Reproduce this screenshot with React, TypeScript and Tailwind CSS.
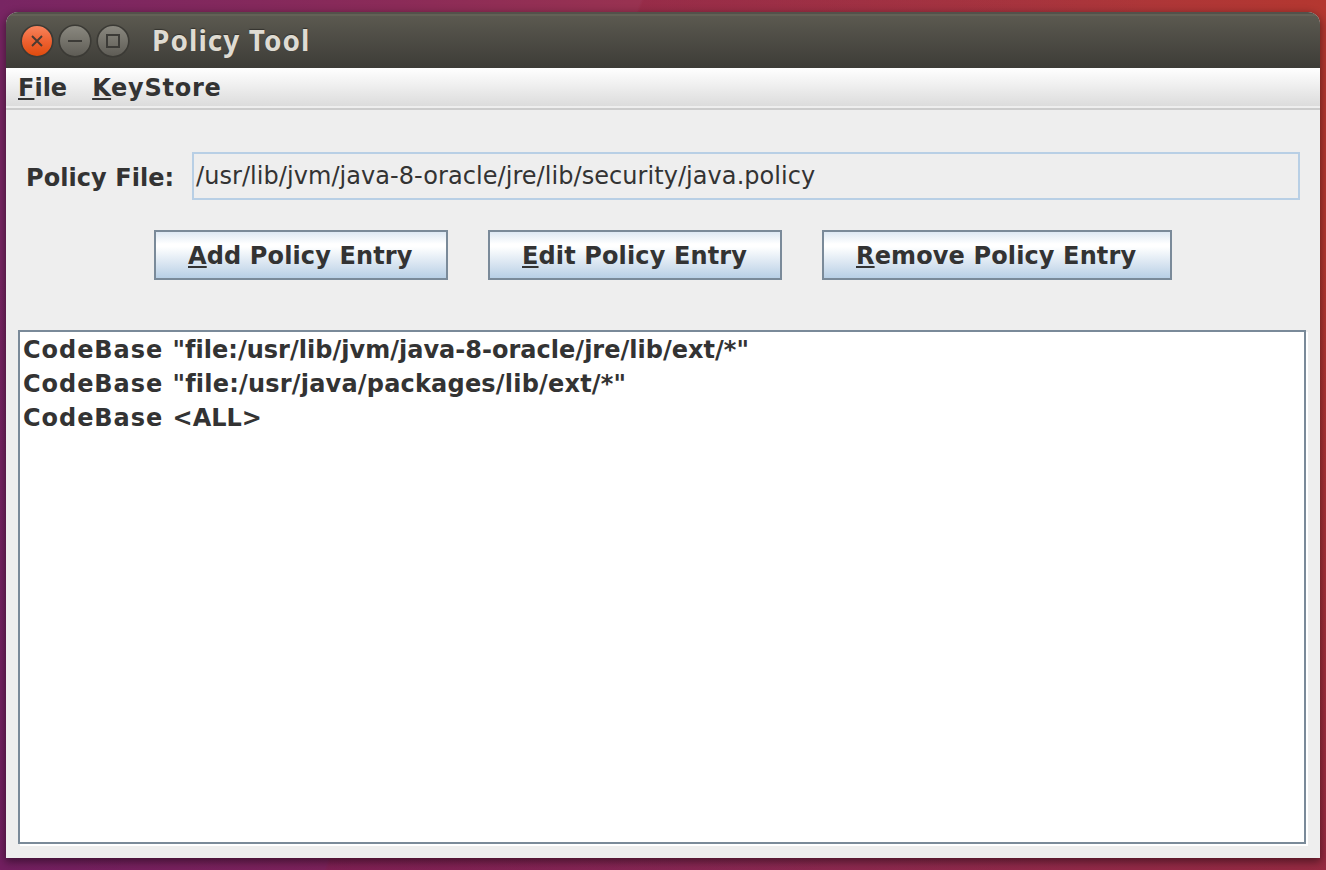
import React from "react";

function Mnemonic({ text }: { text: string }) {
  return (
    <span className="whitespace-pre">
      <span className="underline decoration-[#333333] decoration-2 underline-offset-2 [text-decoration-skip-ink:none]">
        {text[0]}
      </span>
      {text.slice(1)}
    </span>
  );
}

function WindowButton({ kind }: { kind: "close" | "minimize" | "maximize" }) {
  const close = kind === "close";
  return (
    <svg width="34" height="34" viewBox="0 0 34 34" fill="none">
      <defs>
        <linearGradient id={`face-${kind}`} x1="0" y1="0" x2="0" y2="1">
          <stop offset="0" stopColor={close ? "#f9865f" : "#8b8980"} />
          <stop offset="0.5" stopColor={close ? "#ee6232" : "#75736b"} />
          <stop offset="1" stopColor={close ? "#df4a0b" : "#5d5b54"} />
        </linearGradient>
      </defs>
      <circle cx="17" cy="17" r="15.8" fill={`url(#face-${kind})`} stroke="#3b3a35" strokeWidth="1.6" />
      {close && <path d="M12 12 22 22M22 12 12 22" stroke="#4b3a31" strokeWidth="1.9" />}
      {kind === "minimize" && <path d="M10 17H24" stroke="#3c3b37" strokeWidth="2" />}
      {kind === "maximize" && <rect x="11" y="11" width="12" height="12" stroke="#3c3b37" strokeWidth="2" />}
    </svg>
  );
}

function PolicyButton({ label, width }: { label: string; width: string }) {
  return (
    <button
      className={`${width} h-[50px] border-2 border-[#7a8a99] bg-[linear-gradient(180deg,#dde8f3_0%,#ffffff_26%,#ffffff_32%,#b8cfe5_100%)] pt-px pl-8 text-left font-bold tracking-[0.13px]`}
    >
      <Mnemonic text={label} />
    </button>
  );
}

const entries = [
  { target: '"file:/usr/lib/jvm/java-8-oracle/jre/lib/ext/*"', tracking: "tracking-[0.02px]" },
  { target: '"file:/usr/java/packages/lib/ext/*"', tracking: "tracking-[0.2px]" },
  { target: "<ALL>", tracking: "tracking-[0px]" },
];

export default function App() {
  return (
    <div className="h-[870px] w-[1326px] overflow-hidden bg-[linear-gradient(110deg,transparent_0_39%,#94223c66_39.2%,transparent_70%),linear-gradient(90deg,#782563_0%,#8b2b58_30%,#9a3350_50%,#a33545_65%,#b43730_100%)]">
      <div className="h-full bg-[linear-gradient(180deg,transparent_0%,transparent_30%,#6a165c66_100%)] pt-3 pl-1.5">
        <div className="flex h-[846px] w-[1314px] flex-col overflow-hidden rounded-t-[12px] bg-[#eeeeee] font-['DejaVu_Sans',sans-serif] text-[24px] leading-[34px] text-[#333333] shadow-[0_3px_8px_1px_#00000070]">
          <header className="flex h-14 shrink-0 items-center bg-[linear-gradient(180deg,#53514a_0px,#53514a_2px,#636156_2px,#636156_4px,#5b5950_4px,#3d3c37_56px)] pt-0.5 pl-3.5 font-['Noto_Sans',sans-serif]">
            <div className="flex gap-1">
              <WindowButton kind="close" />
              <WindowButton kind="minimize" />
              <WindowButton kind="maximize" />
            </div>
            <h1 className="-mt-0.5 ml-[22px] text-[28px] font-bold tracking-[1.05px] whitespace-pre text-[#dfdbd2] [text-shadow:0_-1px_1px_#33322e]">
              Policy Tool
            </h1>
          </header>
          <nav className="flex h-[42px] shrink-0 gap-[25px] border-b-2 border-[#cccccc] bg-[linear-gradient(180deg,#ffffff_0px,#dcdcdc_38px,#eeeeee_38px)] pt-[3px] pl-3 font-bold">
            <Mnemonic text="File" />
            <span className="tracking-[0.75px]">
              <Mnemonic text="KeyStore" />
            </span>
          </nav>
          <main className="flex flex-1 flex-col px-3 pt-[42px] pb-3">
            <div className="flex h-12 items-center pr-2 pl-2">
              <label className="w-[166px] shrink-0 pt-1 font-bold tracking-[0.06px] whitespace-pre">Policy File:</label>
              <div className="h-12 flex-1 border-2 border-[#b8cfe5] pt-[5px] pl-[2px] tracking-[0.06px] whitespace-pre">
                /usr/lib/jvm/java-8-oracle/jre/lib/security/java.policy
              </div>
            </div>
            <div className="mt-[30px] flex justify-center gap-10">
              <PolicyButton label="Add Policy Entry" width="w-[294px]" />
              <PolicyButton label="Edit Policy Entry" width="w-[294px]" />
              <PolicyButton label="Remove Policy Entry" width="w-[350px]" />
            </div>
            <ul className="mt-[50px] h-[514px] w-[1288px] border-2 border-[#7a8a99] bg-white pt-px pl-[3px] font-bold shadow-[2px_2px_0_#ffffff]">
              {entries.map(({ target, tracking }) => (
                <li key={target} className="h-[34px] whitespace-pre">
                  <span className="tracking-[0.95px]">CodeBase </span>
                  <span className={tracking}>{target}</span>
                </li>
              ))}
            </ul>
          </main>
        </div>
      </div>
    </div>
  );
}
